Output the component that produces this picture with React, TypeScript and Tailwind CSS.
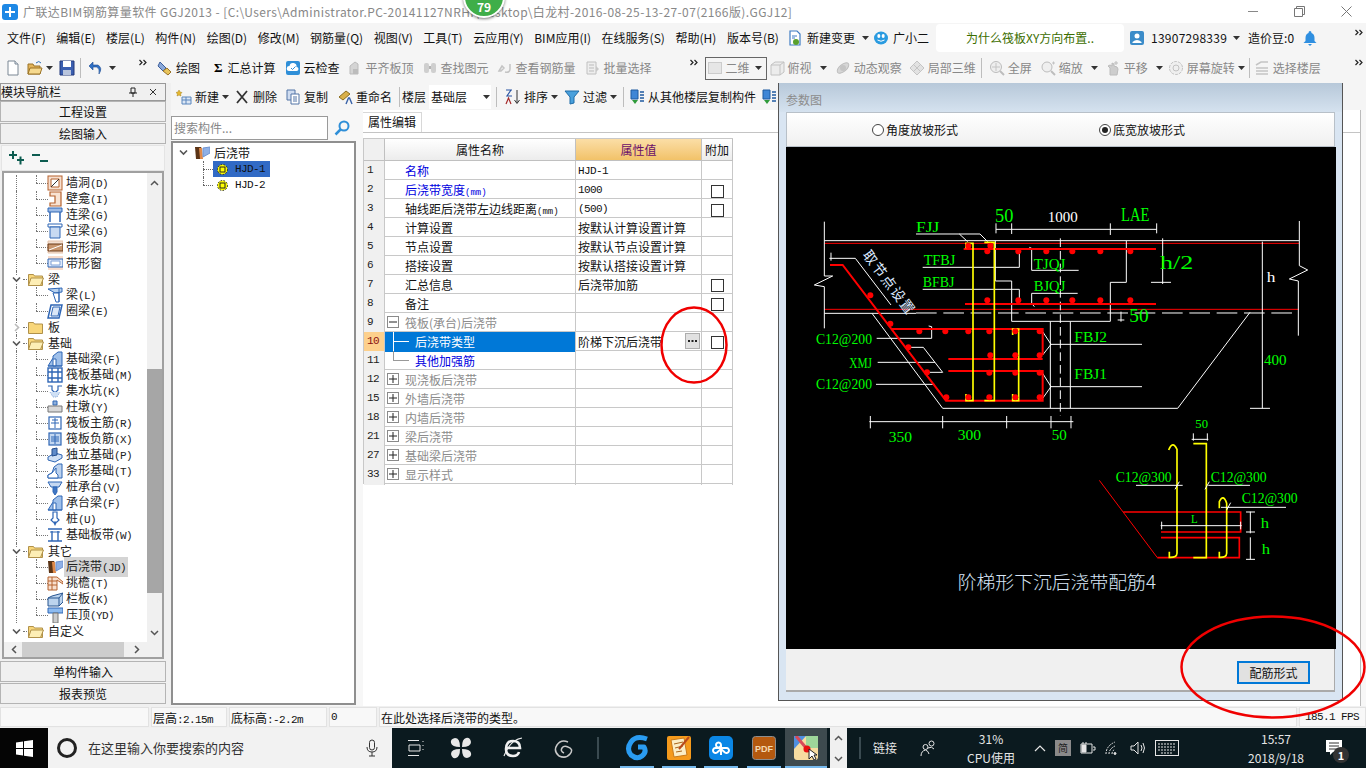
import React from 'react';

const FONT = "font-['Noto_Sans_CJK_SC','Liberation_Sans',sans-serif]";
const MONO = "font-['Liberation_Mono','Noto_Sans_CJK_SC',monospace]";
const NARROW = 'text-[11px] tracking-[-0.6px]';

const Caret = ({ className = '' }: { className?: string }) => (
  <svg width="7" height="4" viewBox="0 0 7 4" className={className}>
    <path d="M0 0h7L3.5 4z" fill="#333" />
  </svg>
);

const More = () => (
  <svg width="8" height="8" viewBox="0 0 8 8" fill="none" stroke="#222" strokeWidth="1.2">
    <path d="M0.5 1l2.5 2.5L0.5 6M4.5 1L7 3.5 4.5 6" />
  </svg>
);

// small toolbar drawings, 16x16
const toolIcons: Record<string, React.ReactNode> = {
  file: <><path d="M3 1h7l3 3v11H3z" fill="#fff" stroke="#7a8794" /><path d="M10 1v3h3" fill="#dfe6ee" stroke="#7a8794" /></>,
  open: <><path d="M1 4h5l1 2h6v8H1z" fill="#e3b45a" stroke="#9a7326" /><path d="M3 8h12l-2 6H1z" fill="#f6d98e" stroke="#9a7326" /><path d="M9 3q3-3 5 0" fill="none" stroke="#2e6fb5" /></>,
  save: <><path d="M1 1h14v14H1z" fill="#3b5fb0" stroke="#22397a" /><path d="M4 1h8v6H4z" fill="#fff" /><path d="M4 10h8v5H4z" fill="#b8c4dc" /></>,
  undo: <path d="M11 14q4-6-1-9H5V2L1 6l4 4V7h4q3 2 2 7z" fill="#2f6fc4" stroke="#1c4c92" strokeWidth="0.6" />,
  draw: <><path d="M3 2l6 6-3 3-5-5z" fill="#8aa8d8" stroke="#3b5e9c" /><path d="M6 11l4-3 4 4-3 3z" fill="#e8c45c" stroke="#9a7326" /></>,
  cloud: <><rect x="1" y="1" width="14" height="14" rx="2" fill="#2f8fd8" /><path d="M4 11a2.500 2.500 0 0 1 .5-5 3.500 3.500 0 0 1 7 1 2 2 0 0 1 0 4z" fill="#fff" /><path d="M6 8l1.500 1.500L10.500 6.500" fill="none" stroke="#2f8fd8" /></>,
  align: <><path d="M3 14V6l5-4 3 2v10z" fill="#d4d4d4" stroke="#bbb" /><path d="M6 14v-5h5v5z" fill="#bcbcbc" /></>,
  find: <><rect x="2" y="3" width="5" height="10" rx="2" fill="#cfcfcf" /><rect x="9" y="3" width="5" height="10" rx="2" fill="#cfcfcf" /><path d="M7 6h2v3H7z" fill="#b5b5b5" /></>,
  steel: <path d="M2 11l3-5 2 2-3 3zM8 12q5 1 5-3V4" fill="none" stroke="#c4c4c4" strokeWidth="1.500" />,
  batch: <><path d="M2 2h9v12H2z" fill="#eee" stroke="#c0c0c0" /><path d="M4 5h5M4 8h5M4 11h5" stroke="#bbb" /><path d="M11 6l3 3-3 3z" fill="#c8c8c8" /></>,
  box: <><path d="M2 5l4-3h9v10l-4 3H2z" fill="#ececec" stroke="#c2c2c2" /><path d="M2 5h9v10M11 5l4-3" fill="none" stroke="#c2c2c2" /></>,
  orbit: <><ellipse cx="8" cy="8" rx="7" ry="3.500" transform="rotate(-40 8 8)" fill="#d6d6d6" stroke="#bdbdbd" /><circle cx="8" cy="8" r="3" fill="#c4c4c4" /></>,
  local: <><path d="M8 1l7 7-7 7-7-7z" fill="#e2e2e2" stroke="#c4c4c4" /><path d="M5 5l6 6M11 5l-6 6" stroke="#c4c4c4" /></>,
  zoomAll: <><circle cx="7" cy="7" r="5.500" fill="#eee" stroke="#bdbdbd" /><path d="M7 3v8M3 7h8" stroke="#c4c4c4" /><path d="M11 11l4 4" stroke="#bdbdbd" strokeWidth="2" /></>,
  zoom: <><circle cx="7" cy="7" r="5" fill="#efefef" stroke="#bdbdbd" /><path d="M11 11l4 4" stroke="#bdbdbd" strokeWidth="2" /><path d="M12 3h3M13.500 1.500v3" stroke="#c4c4c4" /></>,
  pan: <><path d="M5 15V8l-2-2 2-1 2 1V3l2 1v2l3 1 1 2-1 6z" fill="#cdcdcd" stroke="#bcbcbc" /><path d="M11 1v4M9 3h4" stroke="#bcbcbc" /></>,
  rotate: <><circle cx="8" cy="8" r="6.500" fill="#efefef" stroke="#c2c2c2" strokeDasharray="3 1" /><circle cx="8" cy="8" r="3" fill="none" stroke="#c2c2c2" /></>,
  floors: <path d="M2 5l5-3h7M2 8h12M2 11h12M2 14h12" fill="none" stroke="#c4c4c4" strokeWidth="1.500" />,
  add: <><path d="M3 1l1 2 2 .5-1.500 1.500.5 2-2-1-2 1 .5-2L0 3.500 2 3z" fill="#e8b92e" stroke="#a27f16" strokeWidth="0.5" /><path d="M6 8h9v7H6z" fill="#dbe6f4" stroke="#5b86bd" /><path d="M6 11h9M10 8v7" stroke="#5b86bd" /></>,
  del: <path d="M3 2l10 12M13 2L3 14" stroke="#333" strokeWidth="1.800" />,
  copy: <><path d="M2 1h8v10H2z" fill="#cfdcf0" stroke="#5374a6" /><path d="M6 5h8v10H6z" fill="#fff" stroke="#5374a6" /><path d="M8 8h4M8 10h4M8 12h4" stroke="#5374a6" /></>,
  rename: <><path d="M2 8l7-6 4 3-7 6z" fill="#d9b04a" stroke="#8b6d1d" /><path d="M9 15l2.500-6h1l2.500 6" fill="none" stroke="#3a63a8" strokeWidth="1.400" /></>,
  sort: <><path d="M1 1h6M6 1L2 7h5" fill="none" stroke="#2954a3" strokeWidth="1.200" /><path d="M1 15l2.500-6 2.500 6" fill="none" stroke="#a52a2a" strokeWidth="1.200" /><path d="M12 1v13M9.500 11l2.500 3.500 2.500-3.500" fill="none" stroke="#333" /></>,
  filter: <path d="M1 2h14L10 8v6l-4 1V8z" fill="#49a0dc" stroke="#1f6ca8" />,
  floorCopy: <><path d="M2 1h7v9H2z" fill="#3f86d6" stroke="#1f5aa0" /><path d="M3 11l3 4 3-4z" fill="#2f9b3a" /><path d="M11 3h4M11 6h4M11 9h4M11 12h4" stroke="#1f5aa0" strokeWidth="1.400" /></>,
  doc: <><path d="M3 1h7l3 3v11H3z" fill="#fff" stroke="#3f7cc4" strokeWidth="1.200" /><path d="M5 6h5M5 8h3" stroke="#3f7cc4" /><circle cx="9" cy="12" r="3" fill="#5aa02c" /></>,
  qq: <><ellipse cx="8" cy="8" rx="7" ry="6.500" fill="#2a9be0" /><ellipse cx="5.800" cy="6" rx="1.500" ry="2" fill="#fff" /><ellipse cx="10.200" cy="6" rx="1.500" ry="2" fill="#fff" /><path d="M4.500 10q3.500 2.500 7 0" stroke="#fff" fill="none" /></>,
  user: <><rect x="1" y="1" width="14" height="14" rx="2" fill="#3b8cc9" /><circle cx="8" cy="6" r="2.500" fill="#fff" /><path d="M3.500 12q4.500-4 9 0v1h-9z" fill="#fff" /></>,
  bell: <path d="M8 1q1.500 0 1.500 2 3 1 3 5v3l2 2H1.500l2-2V8q0-4 3-5Q6.500 1 8 1zM6 14h4l-2 2z" fill="#2f8fe0" />,
};

const Ico = ({ name, className = '' }: { name: string; className?: string }) => (
  <svg width="16" height="16" viewBox="0 0 16 16" className={`shrink-0 ${className}`}>
    {toolIcons[name]}
  </svg>
);

// tree icons
const blue = '#2f66b5';
const brown = '#b5622e';
const treeIcons: Record<string, React.ReactNode> = {
  wallHole: <><rect x="1" y="1" width="14" height="14" fill="#f6dfcf" stroke={brown} /><path d="M4 4h8v8H4z" fill="#fff" stroke={brown} /><path d="M4 12l8-8" stroke="#333" /></>,
  niche: <path d="M3 1h11v14H3v-3h5V5H3z" fill="#f8e3d3" stroke={brown} strokeWidth="1.200" />,
  linkBeam: <><path d="M1 1h14v4H1z" fill="#9dbbe6" stroke={blue} /><path d="M3 5v10M13 5v10" stroke={blue} strokeWidth="1.500" /></>,
  lintel: <><path d="M1 1h14v3H1z" fill="#fff" stroke={blue} /><path d="M3 4h10v11H3z" fill="#c8daf2" stroke={blue} /></>,
  stripHole: <><path d="M1 2h15v12H1z" fill="#f4e0d2" stroke="#e6c3aa" /><path d="M1 5h15v7H1z" fill="#c9976f" stroke="#6b3a18" /><path d="M2 11L15 6" stroke="#fff" /></>,
  stripWin: <><path d="M1 1h15v14H1z" fill="#f8dccc" /><path d="M1 4h15v8H1z" fill="#dfe9fa" stroke={blue} /><path d="M4 6h9v4H4z" fill="#fff" stroke="#7f9fd6" /></>,
  beam: <><path d="M1 2l14-1v4L8 6z" fill="#b9d3f0" stroke={blue} /><path d="M6 6h6v9H9z" fill="#fff" stroke={blue} /><path d="M12 1v14" stroke={blue} /></>,
  ring: <><path d="M4 2h11l-3 13H1z" fill="#fff" stroke={blue} strokeWidth="1.500" /><path d="M6 4h7l-2 9H4z" fill="#dbe7f7" stroke={blue} /></>,
  fBeam: <><path d="M1 15l5-8V5l5-4h4v14z" fill="#9fc0ea" stroke={blue} /><path d="M6 15V8h3v7zM1 15h14" stroke={blue} fill="#fff" /></>,
  raft: <><rect x="1" y="1" width="14" height="14" fill="#fff" stroke={blue} strokeWidth="1.400" /><path d="M5 1v14M11 1v14M1 5h14M1 11h14" stroke={blue} strokeWidth="1.400" /></>,
  sump: <><path d="M1 3h4v4l2 2h2l2-2V3h4" fill="none" stroke={blue} strokeWidth="1.200" /><path d="M3 9l3 5h4l3-5" fill="#cfe0f5" stroke="#88a8d8" strokeDasharray="1 1" /></>,
  pier: <><path d="M6 6V2h4v4z" fill="#8fb0dc" stroke={blue} /><path d="M1 7h14v6H1z" fill="#d8d8d8" stroke="#777" /></>,
  main: <><rect x="2" y="2" width="12" height="12" fill="#fff" stroke={blue} strokeWidth="1.200" /><path d="M8 3v10M4 8h8M5 5h6" stroke={blue} /></>,
  minus: <><rect x="2" y="2" width="12" height="12" fill="#c3d7f1" stroke={blue} strokeWidth="1.200" /><path d="M8 3v10M4 8h8M4 6h8M4 10h8" stroke={blue} /></>,
  isolated: <><path d="M1 10l7-4 7 2v3l-7 4-7-2z" fill="#cfe0f5" stroke={blue} /><path d="M5 9V2l5-1v7z" fill="#5f8bc9" stroke="#234c8c" /></>,
  strip: <><path d="M1 15v-3l4-2 2-6 4-3h4v14z" fill="#bcd2ee" stroke={blue} /><path d="M1 15h10v-3l-2-2V5L5 10l-4 2z" fill="#fff" stroke={blue} /></>,
  cap: <><path d="M1 3h14l-3 5H4z" fill="#c5d8f2" stroke={blue} /><path d="M6 8h4v5l-2 3-2-3z" fill="#3f76c4" stroke={blue} /></>,
  pile: <><path d="M6 1h4v6l2 2-2 2H6L4 9l2-2z" fill="#fff" stroke={blue} strokeWidth="1.200" /><path d="M6 11h4l-2 4z" fill={blue} /></>,
  band: <><path d="M1 2h14M1 14h14" stroke={blue} strokeWidth="1.400" /><path d="M3 5h10" stroke={blue} /><path d="M5 4v10M11 4v10" stroke={blue} strokeWidth="1.400" /></>,
  post: <><path d="M1 2h6l1 2-1 10H2z" fill="#5b3416" /><path d="M5 3h3l1 11H6z" fill="#e08a4a" /><path d="M9 3l7-1v6l-7 4z" fill="#8fb0e6" stroke="#6f93cf" /></>,
  eave: <><path d="M1 2h9l6 5v2l-6-4v10H1z" fill="#f8dfcd" stroke={brown} /><path d="M1 6h9M1 10h9M5 2v13" stroke={brown} /></>,
  parapet: <><path d="M1 7l4-2 11-3v9l-4 4H1z" fill="#bcd4ee" stroke="#27548f" /><path d="M1 7h11v8M12 7l4-5" fill="none" stroke="#27548f" /></>,
  coping: <><path d="M1 1h15v5H1z" fill="#8dbbf0" stroke={blue} /><path d="M6 6h5v10H6z" fill="#ccc" stroke="#777" /></>,
};

const Folder = ({ open }: { open: boolean }) => (
  <svg width="16" height="14" viewBox="0 0 16 14">
    <path d="M0.500 2.500h5l1 1.500h8v9.500h-14z" fill="#f8d67a" stroke="#b0914a" />
    {open && <path d="M3 6h12.500l-3 7.500h-12z" fill="#fdeeb5" stroke="#b0914a" />}
  </svg>
);

const Chevron = ({ open }: { open: boolean }) => (
  <svg width="9" height="9" viewBox="0 0 9 9" fill="none" stroke={open ? '#555' : '#bbb'} strokeWidth="1.600">
    {open ? <path d="M1 2.500l3.500 3.500L8 2.500" /> : <path d="M3 1l3.500 3.500L3 8" />}
  </svg>
);

type NavRow = { name: string; code?: string; icon?: string; folder?: 'open' | 'closed'; active?: boolean };

const navRows: NavRow[] = [
  { name: '墙洞', code: '(D)', icon: 'wallHole' },
  { name: '壁龛', code: '(I)', icon: 'niche' },
  { name: '连梁', code: '(G)', icon: 'linkBeam' },
  { name: '过梁', code: '(G)', icon: 'lintel' },
  { name: '带形洞', icon: 'stripHole' },
  { name: '带形窗', icon: 'stripWin' },
  { name: '梁', folder: 'open' },
  { name: '梁', code: '(L)', icon: 'beam' },
  { name: '圈梁', code: '(E)', icon: 'ring' },
  { name: '板', folder: 'closed' },
  { name: '基础', folder: 'open' },
  { name: '基础梁', code: '(F)', icon: 'fBeam' },
  { name: '筏板基础', code: '(M)', icon: 'raft' },
  { name: '集水坑', code: '(K)', icon: 'sump' },
  { name: '柱墩', code: '(Y)', icon: 'pier' },
  { name: '筏板主筋', code: '(R)', icon: 'main' },
  { name: '筏板负筋', code: '(X)', icon: 'minus' },
  { name: '独立基础', code: '(P)', icon: 'isolated' },
  { name: '条形基础', code: '(T)', icon: 'strip' },
  { name: '桩承台', code: '(V)', icon: 'cap' },
  { name: '承台梁', code: '(F)', icon: 'fBeam' },
  { name: '桩', code: '(U)', icon: 'pile' },
  { name: '基础板带', code: '(W)', icon: 'band' },
  { name: '其它', folder: 'open' },
  { name: '后浇带', code: '(JD)', icon: 'post', active: true },
  { name: '挑檐', code: '(T)', icon: 'eave' },
  { name: '栏板', code: '(K)', icon: 'parapet' },
  { name: '压顶', code: '(YD)', icon: 'coping' },
  { name: '自定义', folder: 'open' },
];

const NavButton = ({ label }: { label: string }) => (
  <div className="h-[21px] mb-px border border-[#b4b4b4] bg-[#f0f0f0] text-center text-[12px] leading-[20px] text-[#111]">{label}</div>
);

const NavTree = () => (
  <div className="relative flex-1 overflow-hidden bg-white pt-[2px]">
    {navRows.map((r, i) => (
      <div key={i} className="relative flex h-4 items-center text-[12px] text-[#222]">
        {i < 28 && <span className="absolute left-[12px] top-0 h-4 border-l border-dotted border-[#777]" />}
        {r.folder ? (
          <>
            <span className="absolute left-[8px] top-[4px] bg-white leading-none"><Chevron open={r.folder === 'open'} /></span>
            <span className="absolute left-[19px] top-[8px] w-[6px] border-t border-dotted border-[#777]" />
            <span className="absolute left-[24px] top-[1px] leading-none"><Folder open={r.folder === 'open'} /></span>
            <span className="ml-[44px]">{r.name}</span>
          </>
        ) : (
          <>
            <span className="absolute left-[32px] top-0 h-2 border-l border-dotted border-[#777]" />
            <span className="absolute left-[32px] top-[8px] w-[12px] border-t border-dotted border-[#777]" />
            <svg width="16" height="16" viewBox="0 0 16 16" className="absolute left-[43px] top-0">{treeIcons[r.icon!]}</svg>
            <span className={`ml-[60px] pl-[2px] pr-[2px] ${r.active ? 'bg-[#d4d4d4]' : ''}`}>
              {r.name}
              {r.code && <span className={`${MONO} ${NARROW}`}>{r.code}</span>}
            </span>
          </>
        )}
      </div>
    ))}
  </div>
);

const LeftNav = () => (
  <div className="flex h-full w-[166px] shrink-0 flex-col bg-[#f0f0f0] pb-px">
    <div className="flex h-[18px] shrink-0 items-center border border-[#999] text-[12px] leading-none text-[#111]">
      <span>模块导航栏</span>
      <span className="ml-auto mr-2 flex items-center gap-3">
        <svg width="8" height="10" viewBox="0 0 8 10" stroke="#222" fill="none"><path d="M2 1h4v5H2zM0 6h8M4 6v4" /></svg>
        <svg width="8" height="8" viewBox="0 0 8 8" stroke="#333"><path d="M1 1l6 6M7 1L1 7" /></svg>
      </span>
    </div>
    <NavButton label="工程设置" />
    <NavButton label="绘图输入" />
    <div className="mx-px flex h-[26px] shrink-0 items-center gap-[7px] border border-[#e4e4e4] bg-[#f6f6f6] pl-[6px]">
      <svg width="17" height="14" viewBox="0 0 17 14" stroke="#0d5c50" strokeWidth="2"><path d="M1 4h8M5 0v8M9 9h7M12.500 5.500v8" /></svg>
      <svg width="16" height="10" viewBox="0 0 16 10" stroke="#0d5c50" strokeWidth="2"><path d="M0 2h8M8 8h8" /></svg>
    </div>
    <div className="mx-[2px] flex min-h-0 flex-1 flex-col border-2 border-[#a0a0a0] bg-[#f0f0f0]">
      <div className="flex min-h-0 flex-1">
        <NavTree />
        <div className="flex w-[15px] shrink-0 flex-col items-center bg-[#f0f0f0]">
          <svg width="9" height="6" viewBox="0 0 9 6" fill="none" stroke="#555" strokeWidth="1.500" className="mt-[7px]"><path d="M1 5l3.500-3.500L8 5" /></svg>
          <div className="mt-[183px] h-[224px] w-[15px] bg-[#a6a6a6]" />
          <svg width="9" height="6" viewBox="0 0 9 6" fill="none" stroke="#555" strokeWidth="1.500" className="mt-auto mb-[6px]"><path d="M1 1l3.500 3.500L8 1" /></svg>
        </div>
      </div>
      <div className="flex h-[15px] shrink-0 items-center bg-[#f0f0f0]">
        <svg width="6" height="9" viewBox="0 0 6 9" fill="none" stroke="#555" strokeWidth="1.500" className="ml-[7px]"><path d="M5 1L1.500 4.500 5 8" /></svg>
        <div className="ml-[5px] h-[15px] w-[102px] bg-[#cdcdcd]" />
        <svg width="6" height="9" viewBox="0 0 6 9" fill="none" stroke="#555" strokeWidth="1.500" className="ml-[10px]"><path d="M1 1l3.500 3.500L1 8" /></svg>
      </div>
    </div>
    <div className="mt-[2px]"><NavButton label="单构件输入" /></div>
    <NavButton label="报表预览" />
  </div>
);

const TitleBar = () => (
  <div className="flex h-[23px] shrink-0 items-center bg-white text-[12px] text-[#888]">
    <svg width="16" height="16" viewBox="0 0 16 16" className="ml-[2px]">
      <rect width="16" height="16" rx="3" fill="#1e88e5" />
      <path d="M7 3v4H3v2h4v4h2V9h4V7H9V3z" fill="#fff" />
    </svg>
    <span className="ml-[5px] whitespace-nowrap tracking-[0.4px]">广联达BIM钢筋算量软件 GGJ2013 - [C:\Users\Administrator.PC-20141127NRHI\Desktop\白龙村-2016-08-25-13-27-07(2166版).GGJ12]</span>
    <span className="ml-auto flex items-center gap-[36px] pr-[14px]">
      <span className="h-px w-[10px] bg-[#888]" />
      <svg width="11" height="11" viewBox="0 0 11 11" fill="none" stroke="#777"><path d="M2.500 2.500V.5h8v8h-2M.5 2.500h8v8h-8z" /></svg>
      <svg width="11" height="11" viewBox="0 0 11 11" stroke="#777"><path d="M.5.5l10 10M10.500.5l-10 10" /></svg>
    </span>
  </div>
);

const menus = ['文件(F)', '编辑(E)', '楼层(L)', '构件(N)', '绘图(D)', '修改(M)', '钢筋量(Q)', '视图(V)', '工具(T)', '云应用(Y)', 'BIM应用(I)', '在线服务(S)', '帮助(H)', '版本号(B)'];

const MenuBar = () => (
  <div className="flex h-[30px] shrink-0 items-center bg-[#f5f5f5] pl-[7px] text-[12px] text-[#111]">
    <div className="flex w-[780px] shrink-0 justify-between whitespace-nowrap pr-[8px]">
      {menus.map((m) => <span key={m}>{m}</span>)}
    </div>
    <Ico name="doc" />
    <span className="ml-[4px] whitespace-nowrap">新建变更</span>
    <Caret className="ml-[7px]" />
    <Ico name="qq" className="ml-[4px]" />
    <span className="ml-[4px] whitespace-nowrap">广小二</span>
    <div className="ml-[7px] flex h-[28px] w-[188px] shrink-0 items-center justify-center rounded-sm bg-white text-[#3c6e00]">为什么筏板XY方向布置..</div>
    <Ico name="user" className="ml-[5px]" />
    <span className="ml-[6px] whitespace-nowrap tracking-[0.25px]">13907298339</span>
    <Caret className="ml-[6px]" />
    <span className="ml-[8px] whitespace-nowrap">造价豆:0</span>
    <Ico name="bell" className="ml-[8px]" />
    <span className="ml-auto mr-[3px] mb-[10px]"><More /></span>
  </div>
);

const Tool = ({ icon, label, muted, className = '', caret }: { icon?: string; label: string; muted?: boolean; className?: string; caret?: boolean }) => (
  <div className={`flex shrink-0 items-center gap-[3px] whitespace-nowrap ${muted ? 'text-[#888]' : 'text-[#111]'} ${className}`}>
    {icon && <Ico name={icon} />}
    <span>{label}</span>
    {caret && <Caret />}
  </div>
);

const Sep = ({ className = '' }: { className?: string }) => <span className={`h-[20px] w-px shrink-0 bg-[#bdbdbd] ${className}`} />;

const ToolBar = () => (
  <div className="flex h-[30px] shrink-0 items-center bg-[#f5f5f5] pl-[5px] text-[12px]">
    <Ico name="file" />
    <Ico name="open" className="ml-[6px]" />
    <Caret className="ml-[3px]" />
    <Ico name="save" className="ml-[6px]" />
    <Sep className="ml-[5px]" />
    <Ico name="undo" className="ml-[7px]" />
    <Caret className="ml-[5px]" />
    <span className="ml-[23px] mb-[10px]"><More /></span>
    <Tool icon="draw" label="绘图" className="ml-[10px]" />
    <span className="ml-[14px] font-['Liberation_Serif'] text-[13px] font-bold">Σ</span>
    <span className="ml-[5px] whitespace-nowrap text-[#111]">汇总计算</span>
    <Tool icon="cloud" label="云检查" className="ml-[9px]" />
    <Tool icon="align" label="平齐板顶" muted className="ml-[7px]" />
    <Tool icon="find" label="查找图元" muted className="ml-[8px]" />
    <Tool icon="steel" label="查看钢筋量" muted className="ml-[8px]" />
    <Tool icon="batch" label="批量选择" muted className="ml-[9px]" />
    <span className="ml-[38px] mb-[10px]"><More /></span>
    <div className="ml-[7px] flex h-[23px] w-[62px] shrink-0 items-center border border-[#666] pl-[2px] text-[#888]">
      <span className="h-[12px] w-[14px] border border-[#ccc] bg-[#e6e6e6]" />
      <span className="ml-[4px]">二维</span>
      <Caret className="ml-[5px]" />
    </div>
    <Tool icon="box" label="俯视" muted className="ml-[2px]" />
    <Caret className="ml-[8px]" />
    <Tool icon="orbit" label="动态观察" muted className="ml-[8px]" />
    <Tool icon="local" label="局部三维" muted className="ml-[7px]" />
    <Sep className="ml-[5px]" />
    <Tool icon="zoomAll" label="全屏" muted className="ml-[7px]" />
    <Tool icon="zoom" label="缩放" muted className="ml-[8px]" />
    <Caret className="ml-[8px]" />
    <Tool icon="pan" label="平移" muted className="ml-[7px]" />
    <Caret className="ml-[8px]" />
    <Tool icon="rotate" label="屏幕旋转" muted caret className="ml-[5px]" />
    <Sep className="ml-[4px]" />
    <Tool icon="floors" label="选择楼层" muted className="ml-[4px]" />
    <span className="ml-auto mr-[3px] mb-[10px]"><More /></span>
  </div>
);

const EditBar = () => (
  <div className="flex h-[27px] shrink-0 items-center overflow-hidden bg-[#f5f5f5] pl-[5px] text-[12px]">
    <Tool icon="add" label="新建" caret />
    <Tool icon="del" label="删除" className="ml-[5px]" />
    <Tool icon="copy" label="复制" className="ml-[8px]" />
    <Tool icon="rename" label="重命名" className="ml-[9px]" />
    <Sep className="ml-[7px]" />
    <span className="ml-[2px] whitespace-nowrap text-[#111]">楼层</span>
    <div className="ml-[3px] flex h-[24px] w-[62px] shrink-0 items-center bg-white text-[#111]">
      <span className="ml-[2px]">基础层</span>
      <Caret className="ml-[16px]" />
    </div>
    <Sep className="ml-[5px]" />
    <Tool icon="sort" label="排序" caret className="ml-[8px]" />
    <Tool icon="filter" label="过滤" caret className="ml-[6px]" />
    <Sep className="ml-[6px]" />
    <Tool icon="floorCopy" label="从其他楼层复制构件" className="ml-[5px]" />
    <Ico name="floorCopy" className="ml-[5px]" />
  </div>
);

const SearchTree = () => (
  <div className="mt-[5px] flex w-[185px] shrink-0 flex-col">
    <div className="flex h-[26px] shrink-0 items-center">
      <div className="flex h-[24px] w-[157px] items-center border border-[#9a9a9a] bg-white pl-[2px] text-[12px] text-[#888]">搜索构件...</div>
      <svg width="16" height="16" viewBox="0 0 16 16" fill="none" className="ml-[6px]">
        <circle cx="10" cy="6" r="4.500" stroke="#2f8fd8" strokeWidth="2" />
        <path d="M6.500 9.500L1.500 14.500" stroke="#2f8fd8" strokeWidth="2.500" />
      </svg>
    </div>
    <div className="relative mb-px flex-1 border-2 border-[#8f8f8f] bg-white text-[12px] text-[#111]">
      <div className="relative mt-px flex h-[17px] items-center">
        <span className="ml-[6px] leading-none"><Chevron open /></span>
        <svg width="16" height="16" viewBox="0 0 16 16" className="ml-[6px]">{treeIcons.post}</svg>
        <span className="ml-[4px]">后浇带</span>
      </div>
      {['HJD-1', 'HJD-2'].map((n, i) => (
        <div key={n} className="relative flex h-4 items-center">
          <span className={`absolute left-[30px] top-0 border-l border-dotted border-[#666] ${i === 0 ? 'h-4' : 'h-2'}`} />
          <span className="absolute left-[30px] top-[8px] w-[10px] border-t border-dotted border-[#666]" />
          <div className={`ml-[40px] flex h-4 items-center pl-[4px] ${i === 0 ? 'w-[57px] bg-[#316ac5]' : ''}`}>
            <svg width="11" height="11" viewBox="0 0 11 11">
              <circle cx="5.500" cy="5.500" r="5" fill="#ffff00" stroke="#222" strokeDasharray="1.500 1.500" />
              <rect x="3" y="3" width="5" height="5" fill="#ffff00" stroke="#222" />
            </svg>
            <span className={`${MONO} ml-[7px] ${NARROW}`}>{n}</span>
          </div>
        </div>
      ))}
    </div>
  </div>
);

type PropRow = {
  no: number;
  name: string;
  unit?: string;
  value?: string;
  mono?: boolean;
  tone?: 'blue' | 'gray' | 'black';
  check?: boolean;
  box?: 'minus' | 'plus';
  child?: 'active' | 'last';
};

const propRows: PropRow[] = [
  { no: 1, name: '名称', value: 'HJD-1', mono: true, tone: 'blue' },
  { no: 2, name: '后浇带宽度', unit: '(mm)', value: '1000', mono: true, tone: 'blue', check: true },
  { no: 3, name: '轴线距后浇带左边线距离', unit: '(mm)', value: '(500)', mono: true, check: true },
  { no: 4, name: '计算设置', value: '按默认计算设置计算' },
  { no: 5, name: '节点设置', value: '按默认节点设置计算' },
  { no: 6, name: '搭接设置', value: '按默认搭接设置计算' },
  { no: 7, name: '汇总信息', value: '后浇带加筋', check: true },
  { no: 8, name: '备注', check: true },
  { no: 9, name: '筏板(承台)后浇带', tone: 'gray', box: 'minus' },
  { no: 10, name: '后浇带类型', value: '阶梯下沉后浇带', child: 'active', check: true },
  { no: 11, name: '其他加强筋', tone: 'blue', child: 'last' },
  { no: 12, name: '现浇板后浇带', tone: 'gray', box: 'plus' },
  { no: 15, name: '外墙后浇带', tone: 'gray', box: 'plus' },
  { no: 18, name: '内墙后浇带', tone: 'gray', box: 'plus' },
  { no: 21, name: '梁后浇带', tone: 'gray', box: 'plus' },
  { no: 27, name: '基础梁后浇带', tone: 'gray', box: 'plus' },
  { no: 33, name: '显示样式', tone: 'gray', box: 'plus' },
];

const PropTable = () => (
  <div className="mt-[5px] w-[370px] border-l border-t border-[#c8c8c8] text-[12px]">
    <div className="grid h-[22px] grid-cols-[21px_191px_126px_31px] border-b border-[#c0c0c0] leading-[21px]">
      <div className="border-r border-[#c0c0c0] bg-[#f0f0f0]" />
      <div className="border-r border-[#c0c0c0] bg-gradient-to-b from-white to-[#ececec] text-center text-[#111]">属性名称</div>
      <div className="border-r border-[#c0c0c0] bg-gradient-to-b from-[#fbdea6] to-[#f2c268] text-center text-[#6a0f6a]">属性值</div>
      <div className="border-r border-[#c0c0c0] bg-gradient-to-b from-white to-[#ececec] text-center text-[#111]">附加</div>
    </div>
    {propRows.map((r) => {
      const active = r.child === 'active';
      const tone = active ? 'text-white' : r.tone === 'blue' ? 'text-[#0000e0]' : r.tone === 'gray' ? 'text-[#8c8c8c]' : 'text-[#111]';
      return (
        <div key={r.no} className="grid h-[19px] grid-cols-[21px_191px_126px_31px] border-b border-[#c8c8c8] leading-[20px]">
          <div className={`${MONO} ${NARROW} border-r border-[#c8c8c8] pl-[3px] leading-[18px] ${active ? 'bg-[#fdd08c] text-[#8a1010]' : 'bg-[#f0f0f0] text-[#222]'}`}>{r.no}</div>
          <div className={`relative whitespace-nowrap border-r border-[#c8c8c8] ${active ? 'bg-[#0078d7]' : ''} ${tone} ${r.child ? 'pl-[30px]' : 'pl-[20px]'}`}>
            {r.box && (
              <span className="absolute left-[2px] top-[3px] flex h-[12px] w-[12px] items-center justify-center border border-[#8a8a8a] bg-white">
                <svg width="8" height="8" viewBox="0 0 8 8" stroke="#222">
                  <path d="M0 4h8" />
                  {r.box === 'plus' && <path d="M4 0v8" />}
                </svg>
              </span>
            )}
            {r.child && (
              <>
                <span className={`absolute left-[8px] top-0 border-l ${active ? 'h-[19px] border-white' : 'h-[9px] border-[#999]'}`} />
                <span className={`absolute left-[8px] top-[9px] w-[16px] border-t ${active ? 'border-white' : 'border-[#999]'}`} />
              </>
            )}
            {r.name}
            {r.unit && <span className={`${MONO} text-[9px]`}>{r.unit}</span>}
          </div>
          <div className={`relative whitespace-nowrap border-r border-[#c8c8c8] pl-[2px] text-[#111] ${r.mono ? `${MONO} ${NARROW}` : ''}`}>
            {r.value}
            {active && (
              <span className="absolute right-px top-[1px] flex h-[16px] w-[15px] items-center justify-center border border-[#adadad] bg-[#e1e1e1]">
                <svg width="9" height="2" viewBox="0 0 9 2" fill="#222"><path d="M0 0h2v2H0zM3.500 0h2v2h-2zM7 0h2v2H7z" /></svg>
              </span>
            )}
          </div>
          <div className="flex items-center justify-center border-r border-[#c8c8c8]">
            {r.check && <span className="h-[13px] w-[13px] border border-[#333] bg-white" />}
          </div>
        </div>
      );
    })}
  </div>
);

const PropPanel = () => (
  <div className="ml-[7px] mr-[5px] flex min-w-0 flex-1 flex-col border-r border-[#bbb] bg-white">
    <div className="mt-[2px] flex h-[21px] shrink-0 items-end border-b border-[#c4c4c4] bg-white">
      <div className="h-[20px] border-r border-t border-[#d8d8d8] px-[5px] text-[12px] leading-[18px] text-[#111]">属性编辑</div>
    </div>
    <PropTable />
  </div>
);

// reference drawing; coordinates are in 3x units so each group maps one crop of the drawing
const dots = [[547, 167], [613, 167], [604, 184], [697, 184], [781, 184], [859, 184], [943, 184], [1033, 184], [604, 331], [697, 331], [781, 331], [859, 331], [943, 331], [1033, 331], [253, 316], [313, 401], [367, 472], [423, 547], [481, 622], [400, 424], [478, 424], [547, 424], [610, 424], [688, 424], [761, 424], [613, 496], [688, 496], [761, 496], [610, 548], [688, 548], [761, 548], [547, 622], [610, 622], [688, 622], [761, 622]];

const Cad = ({ x, y, t, w, s = 46, fill = '#00ff00', font = 'Liberation Serif' }: { x: number; y: number; t: string; w: number; s?: number; fill?: string; font?: string }) => (
  <text x={x} y={y} fontSize={s} fill={fill} fontFamily={font} textLength={w} lengthAdjust="spacingAndGlyphs">{t}</text>
);

const Drawing = () => (
  <svg viewBox="786 147 550 502" className="block h-[502px] w-[550px] bg-black">
    <g transform="translate(786 190) scale(0.33333)" fill="none" strokeWidth="3">
      <path stroke="#ff0000" d="M115 160H1539M115 358H1539" />
      <path stroke="#fff" d="M115 152H1539M115 95V258H140L85 285L115 290V415M130 205H208L315 345M135 188V212M115 370H390M258 370L470 655H1175L1392 367M793 395V655M853 395V655" />
      <path stroke="#fff" strokeDasharray="62 20" d="M390 369H1532" />
      <path stroke="#fff" strokeDasharray="26 12" d="M823 145V678" />
      <path stroke="#fff" d="M628 152V273H677V394H973V277H1021V152M630 118H1112M630 100V130M677 100V132M973 100V135M1112 100V130M390 132H582L605 155M520 132L545 155M410 232H700V185M410 298H700V325M878 241H737V175L730 172M875 310H737V340L745 350M1130 145V282M1095 277H1155M1005 365V395M995 390H1015" />
      <path stroke="#fff" d="M272 445H437V410L428 408M275 517H447M375 472H412L470 547H430M270 583H445M770 425L795 463L770 495M793 463H1068M770 550L795 590L770 625M793 590H1068M250 695H862M253 678V715M470 678V715M662 678V715M795 678V715M855 678V715" />
      <path stroke="#ff0000" strokeWidth="6" d="M533 177H1110M537 342H1110M315 417H770V495M487 507H770M487 543H770V632H480L170 225H132" />
      <path stroke="#ffff00" strokeWidth="5" d="M540 175V160H561V632H540V612M595 157H625V632H595M680 435V417H698V632H680V612" />
      {dots.map(([cx, cy], i) => <circle key={i} cx={cx} cy={cy} r="9" fill="#ff0000" />)}
      <Cad x={390} y={125} t="FJJ" w={70} />
      <Cad x={627} y={97} t="50" w={55} s={54} />
      <Cad x={785} y={97} t="1000" w={90} fill="#fff" />
      <Cad x={1005} y={92} t="LAE" w={85} s={54} />
      <Cad x={413} y={225} t="TFBJ" w={95} />
      <Cad x={410} y={292} t="BFBJ" w={95} />
      <Cad x={743} y={238} t="TJQJ" w={95} />
      <Cad x={743} y={303} t="BJQJ" w={95} />
      <Cad x={1122} y={237} t="h/2" w={100} s={58} />
      <Cad x={1030} y={397} t="50" w={58} s={54} />
      <Cad x={90} y={463} t="C12@200" w={168} />
      <Cad x={190} y={535} t="XMJ" w={68} />
      <Cad x={90} y={598} t="C12@200" w={168} />
      <Cad x={865} y={455} t="FBJ2" w={98} />
      <Cad x={865} y={566} t="FBJ1" w={98} />
      <Cad x={308} y={755} t="350" w={70} />
      <Cad x={515} y={750} t="300" w={70} />
      <Cad x={797} y={750} t="50" w={45} />
      <text x="228" y="195" transform="rotate(53 228 195)" fontSize="42" fill="#dbe9ff" fontFamily="Noto Sans CJK SC" letterSpacing="4">取节点设置</text>
    </g>
    <g transform="translate(1130 200) scale(0.33333)" fill="none" strokeWidth="3">
      <path stroke="#fff" d="M508 63V197L533 210L478 237L505 243V407M397 125V625M360 625H420" />
      <Cad x={410} y={246} t="h" w={26} fill="#fff" />
      <Cad x={402} y={495} t="400" w={68} />
    </g>
    <g transform="translate(930 400) scale(0.33333)" fill="none" strokeWidth="3">
      <path stroke="#ff0000" d="M508 241L682 473" />
      <path stroke="#ff0000" strokeWidth="5" d="M580 336H932V396H693M693 413H928V473H682" />
      <path stroke="#ffff00" strokeWidth="5" d="M716 150Q728 120 741 148V460Q741 473 718 472V455M790 131H829V473H790M868 325V305Q880 280 890 310V460Q890 473 868 472V455" />
      <path stroke="#fff" d="M785 118H835M790 100V122M832 100V122M618 256H758M735 268L748 245M835 256H960M825 268L838 245M873 322H1068M890 330L902 308M692 377H935M695 365V388M932 365V388M961 335V400M948 336H975M948 396H975M961 412V478M948 478H975" />
      <Cad x={796} y={83} t="50" w={38} s={36} />
      <Cad x={557} y={245} t="C12@300" w={168} />
      <Cad x={842} y={245} t="C12@300" w={168} />
      <Cad x={935} y={309} t="C12@300" w={168} />
      <Cad x={783} y={370} t="L" w={20} s={36} />
      <Cad x={992} y={384} t="h" w={25} />
      <Cad x={995} y={462} t="h" w={25} />
      <text x={83} y={568} fontSize={56} fill="#d8e6f6" fontFamily="Noto Sans CJK SC" fontWeight="300" textLength={595} lengthAdjust="spacingAndGlyphs">阶梯形下沉后浇带配筋4</text>
    </g>
  </svg>
);

const ParamDialog = () => (
  <div className="absolute left-[778px] top-[83px] flex h-[618px] w-[565px] flex-col border-x border-b border-[#555] bg-[#d9e5f2] px-[7px] pb-[8px] text-[12px]">
    <div className="-mx-[7px] flex h-[29px] shrink-0 items-end bg-gradient-to-b from-[#b7c8d9] to-[#d5e2ef] pb-[3px] pl-[7px] text-[#8c8c8c]">参数图</div>
    <div className="flex h-[35px] shrink-0 items-center border border-[#b8c0c8] bg-gradient-to-b from-white to-[#f0f0f0] text-[#111]">
      <span className="ml-[85px] h-[12px] w-[12px] rounded-full border border-[#444] bg-white" />
      <span className="ml-[2px]">角度放坡形式</span>
      <span className="ml-[141px] flex h-[12px] w-[12px] items-center justify-center rounded-full border border-[#444] bg-white"><span className="h-[6px] w-[6px] rounded-full bg-[#222]" /></span>
      <span className="ml-[2px]">底宽放坡形式</span>
    </div>
    <Drawing />
    <div className="flex flex-1 items-start justify-end border-b-2 border-r border-[#aaa] bg-[#f0f0f0] pr-[24px] pt-[12px]">
      <div className="flex h-[23px] w-[73px] items-center justify-center border-2 border-[#0078d7] bg-[#e1e1e1] text-[#111]">配筋形式</div>
    </div>
  </div>
);

const Cell = ({ className = '', children }: { className?: string; children?: React.ReactNode }) => (
  <div className={`h-[20px] shrink-0 whitespace-nowrap border border-[#e2e2e2] bg-[#f8f8f8] pl-[1px] leading-[19px] ${className}`}>{children}</div>
);

const StatusBar = () => (
  <div className="flex h-[22px] shrink-0 items-center gap-[2px] bg-[#f0f0f0] text-[12px] text-[#111]">
    <Cell className="w-[149px]" />
    <Cell className="w-[76px]">层高<span className={`${MONO} ${NARROW}`}>:2.15m</span></Cell>
    <Cell className="w-[98px]">底标高<span className={`${MONO} ${NARROW}`}>:-2.2m</span></Cell>
    <Cell className={`${MONO} ${NARROW} w-[48px]`}>0</Cell>
    <Cell className="w-[918px]">在此处选择后浇带的类型。</Cell>
    <Cell className={`${MONO} ${NARROW} flex-1 pl-[5px]`}>185.1 FPS</Cell>
  </div>
);

const TaskApp = ({ children, active, className = '' }: { children: React.ReactNode; active?: boolean; className?: string }) => (
  <div className={`relative flex h-[40px] w-[42px] shrink-0 items-center justify-center ${active ? 'bg-[#3e4a4e]' : ''} ${className}`}>
    {children}
    <span className={`absolute bottom-0 h-[2px] bg-[#76b9ed] ${active ? 'left-0 right-0' : 'left-[4px] right-[4px]'}`} />
  </div>
);

const TaskBar = () => (
  <div className="flex h-[40px] shrink-0 items-center bg-[#0b1a1f] text-[12px] text-[#e6e6e6]">
    <div className="flex h-[40px] w-[48px] shrink-0 items-center justify-center bg-[#050505]">
      <svg width="17" height="17" viewBox="0 0 17 17" fill="#fff"><path d="M0 2.500l7-1v6.500H0zM8 1.300L17 0v8H8zM0 9h7v6.500l-7-1zM8 9h9v8l-9-1.300z" /></svg>
    </div>
    <div className="flex h-[40px] w-[344px] shrink-0 items-center bg-[#f2f2f2] text-[13px] text-[#333]">
      <span className="ml-[9px] h-[20px] w-[20px] rounded-full border-[3px] border-[#222]" />
      <span className="ml-[11px]">在这里输入你要搜索的内容</span>
      <svg width="12" height="18" viewBox="0 0 12 18" fill="none" stroke="#333" className="ml-auto mr-[14px]"><rect x="3.500" y="1" width="5" height="10" rx="2.500" /><path d="M1 8q0 5 5 5t5-5M6 13v4M3 17h6" /></svg>
    </div>
    <svg width="16" height="18" viewBox="0 0 16 18" fill="none" stroke="#e6e6e6" className="ml-[16px] shrink-0"><path d="M0 1.500h11M0 16.500h11M1 6h11v6H1zM15 2v1M15 6v1M15 10v1" /></svg>
    <div className="ml-[26px] flex shrink-0 items-center gap-[30px]">
      <svg width="22" height="22" viewBox="0 0 22 22" fill="#e8e8e8"><path d="M10 10Q2 10 1 6t4-5q5 0 5 9zM12 10q0-8 4-9t5 4q0 5-9 5zM12 12q8 0 9 4t-4 5q-5 0-5-9zM10 12q0 8-4 9t-5-4q0-5 9-5z" /></svg>
      <svg width="22" height="24" viewBox="0 0 22 24" fill="none" stroke="#f0f0f0" strokeWidth="2.600"><path d="M4 12h14q0-7-7-7t-7 8q0 7 7 7 5 0 6-4" /><path d="M2 20Q8 4 20 2" strokeWidth="1.200" /></svg>
      <svg width="20" height="20" viewBox="0 0 20 20" fill="none" stroke="#c8c8c8" strokeWidth="1.500"><path d="M14 4Q7 1 3 7t2 11q7 3 11-2t-2-7Q10 7 8 10t2 5" /></svg>
    </div>
    <span className="ml-[23px] h-[22px] w-[2px] shrink-0 bg-[#3a4a50]" />
    <div className="ml-[17px] flex shrink-0 items-center">
      <TaskApp><svg width="25" height="26" viewBox="0 0 25 26" fill="none"><path d="M22 4Q11 0 6 7T6 20q6 5 11 1t2-9h-6" stroke="#2a9cf2" strokeWidth="5" strokeLinejoin="round" /></svg></TaskApp>
      <TaskApp><svg width="24" height="24" viewBox="0 0 24 24"><rect width="24" height="24" rx="2" fill="#f59a1c" /><path d="M4 4l13-2 3 17-13 2z" fill="#fbeec8" stroke="#c97a1a" /><path d="M7 8l9-2M8 12l8-2M9 16l6-1" stroke="#a8651c" /><path d="M22 1L12 13" stroke="#b8491c" strokeWidth="2" /></svg></TaskApp>
      <TaskApp><svg width="24" height="24" viewBox="0 0 24 24" fill="none"><rect width="24" height="24" rx="5" fill="#0b87e6" /><path d="M12 19V9a2.500 2.500 0 1 1 0-.1" stroke="#fff" strokeWidth="2" /><path d="M12 12H6.500a2.500 2.500 0 1 0 1.500 4.500L12 13l4 3.500a2.500 2.500 0 1 0 1.500-4.500H12" stroke="#fff" strokeWidth="2" /></svg></TaskApp>
      <TaskApp className="ml-px"><svg width="24" height="24" viewBox="0 0 24 24"><rect x="0.500" y="0.500" width="23" height="23" rx="3" fill="#b4590f" stroke="#8d8d8d" /><text x="12" y="16" fontSize="9" textAnchor="middle" fill="#f4d9b0" fontFamily="Liberation Sans" fontWeight="700">PDF</text></svg></TaskApp>
      <TaskApp active><svg width="24" height="24" viewBox="0 0 24 24"><rect width="24" height="24" rx="3" fill="#f7dca0" /><path d="M12 0h12v12H12z" fill="#9ed69a" /><path d="M0 0h12L0 13z" fill="#4f8fe0" /><path d="M2 0l11 13" stroke="#d84a5a" strokeWidth="3" /><circle cx="13" cy="13" r="3.500" fill="#e81010" /><path d="M15 13v10l3-3 2 4 2-1-2-4h3z" fill="#fff" stroke="#222" /></svg></TaskApp>
    </div>
    <div className="ml-[3px] flex h-[40px] w-[17px] shrink-0 flex-col items-center justify-center gap-[15px] bg-[#f0f0f0]">
      <svg width="9" height="6" viewBox="0 0 9 6" fill="none" stroke="#555" strokeWidth="1.500"><path d="M1 5l3.500-3.500L8 5" /></svg>
      <svg width="9" height="6" viewBox="0 0 9 6" fill="none" stroke="#555" strokeWidth="1.500"><path d="M1 1l3.500 3.500L8 1" /></svg>
    </div>
    <span className="ml-[12px] h-[22px] w-[2px] shrink-0 bg-[#3a4a50]" />
    <span className="ml-[12px] shrink-0">链接</span>
    <svg width="16" height="17" viewBox="0 0 16 17" fill="none" stroke="#e6e6e6" className="ml-[23px] shrink-0"><circle cx="5.500" cy="7" r="2.500" /><circle cx="11.500" cy="3.500" r="2.500" /><path d="M1 16q0-5 4.500-6 3 1 3.500 4M8 8q4-2 6 1" /></svg>
    <div className="ml-[23px] flex w-[64px] shrink-0 flex-col items-center leading-[19px]">
      <span>31%</span>
      <span>CPU使用</span>
    </div>
    <div className="ml-[11px] flex shrink-0 items-center gap-[9px]">
      <svg width="12" height="7" viewBox="0 0 12 7" fill="none" stroke="#e6e6e6" strokeWidth="1.200"><path d="M1 6l5-5 5 5" /></svg>
      <span className="flex h-[16px] w-[16px] items-center justify-center bg-[#8a8a8a] text-[10px] leading-none text-[#222]">简</span>
      <svg width="16" height="14" viewBox="0 0 16 14" fill="none" stroke="#e6e6e6"><path d="M1 3h11v9H1zM3 3V1M6 3V1M13 6h2v3h-2" /><path d="M2 4h4v7H2z" fill="#e6e6e6" /></svg>
      <svg width="16" height="14" viewBox="0 0 16 14" fill="none" stroke="#e6e6e6"><path d="M1 13Q1 5 10 1M4 13q0-5 6-8M7 13q0-3 3-5" strokeDasharray="2 1" /><circle cx="10" cy="12.500" r="1" fill="#e6e6e6" /></svg>
      <svg width="16" height="14" viewBox="0 0 16 14" fill="none" stroke="#e6e6e6"><path d="M1 5h3l4-4v12l-4-4H1zM11 4q2 3 0 6M13 2q3 5 0 10" /></svg>
      <svg width="24" height="16" viewBox="0 0 24 16" fill="none" stroke="#e6e6e6"><rect x="0.500" y="0.500" width="23" height="15" /><path d="M3 4h18M3 7h18M3 10h18M6 13h12" strokeDasharray="2 1" /></svg>
    </div>
    <div className="ml-[66px] flex w-[62px] shrink-0 flex-col items-center leading-[19px]">
      <span>15:57</span>
      <span>2018/9/18</span>
    </div>
    <div className="relative ml-[19px] shrink-0">
      <svg width="16" height="16" viewBox="0 0 16 16" fill="#fff"><path d="M0 0h16v12H7l-3 3v-3H0z" /><path d="M3 3h10M3 6h10M3 9h10" stroke="#333" /></svg>
      <span className="absolute left-[7px] top-[7px] flex h-[16px] w-[16px] items-center justify-center rounded-full bg-[#333] text-[11px] font-bold leading-none text-white">1</span>
    </div>
  </div>
);

const App: React.FC = () => (
  <div className={`${FONT} relative flex h-[768px] w-[1366px] flex-col overflow-hidden bg-[#f0f0f0]`}>
    <TitleBar />
    <MenuBar />
    <ToolBar />
    <div className="flex min-h-0 flex-1">
      <LeftNav />
      <div className="flex min-w-0 flex-1 flex-col pl-[5px]">
        <EditBar />
        <div className="flex min-h-0 flex-1 bg-[#f7f7f7]">
          <SearchTree />
          <PropPanel />
        </div>
      </div>
    </div>
    <StatusBar />
    <TaskBar />

    <ParamDialog />

    {/* score badge and the red marks drawn on the screenshot */}
    <div className="absolute left-[463px] top-[-24px] flex h-[42px] w-[42px] items-end justify-center rounded-full border-2 border-white bg-[#3fae49] pb-[3px] text-[12px] font-bold leading-none text-white shadow-[0_1px_3px_rgba(0,0,0,0.5)]">79</div>
    <svg width="68" height="78" viewBox="0 0 68 78" fill="none" className="absolute left-[660px] top-[306px]">
      <ellipse cx="34" cy="39" rx="32.500" ry="37.500" stroke="#f00000" strokeWidth="2.500" />
    </svg>
    <svg width="186" height="104" viewBox="0 0 186 104" fill="none" className="absolute left-[1180px] top-[615px]">
      <ellipse cx="93" cy="52" rx="91.500" ry="50.500" stroke="#f00000" strokeWidth="2.500" />
    </svg>
  </div>
);

export default App;
